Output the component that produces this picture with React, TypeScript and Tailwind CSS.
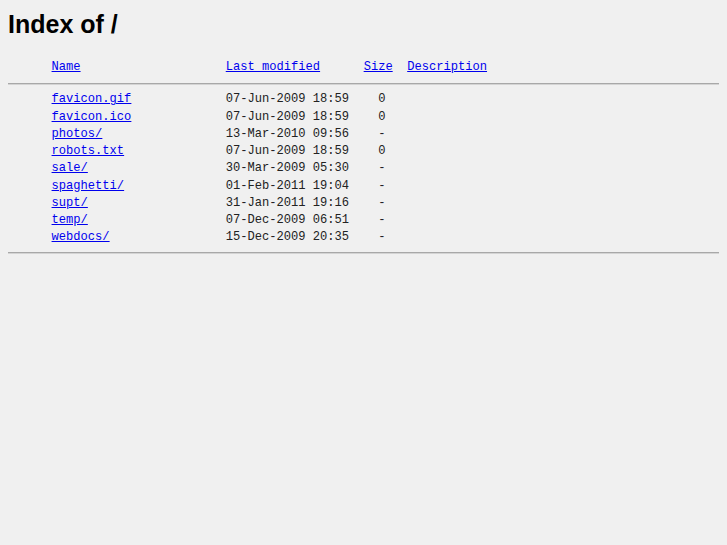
const entries = [
  { name: "favicon.gif", modified: "07-Jun-2009 18:59", size: "0" },
  { name: "favicon.ico", modified: "07-Jun-2009 18:59", size: "0" },
  { name: "photos/", modified: "13-Mar-2010 09:56", size: "-" },
  { name: "robots.txt", modified: "07-Jun-2009 18:59", size: "0" },
  { name: "sale/", modified: "30-Mar-2009 05:30", size: "-" },
  { name: "spaghetti/", modified: "01-Feb-2011 19:04", size: "-" },
  { name: "supt/", modified: "31-Jan-2011 19:16", size: "-" },
  { name: "temp/", modified: "07-Dec-2009 06:51", size: "-" },
  { name: "webdocs/", modified: "15-Dec-2009 20:35", size: "-" },
];

const link = "text-[#0000ee] underline";

export default function App() {
  return (
    <div className="min-h-[545px] bg-[#f0f0f0] px-2 pt-[10px] text-black">
      <h1 className="font-['Liberation_Sans',Arial,sans-serif] text-[25px] leading-[29px] font-bold">
        Index of /
      </h1>
      <div className="mt-[20px] font-['Liberation_Mono','Courier_New',monospace] text-[12.1px] leading-[17.25px] whitespace-pre text-[#222]">
        <div>
          {"      "}
          <a href="?C=N;O=D" className={link}>Name</a>
          {"                    "}
          <a href="?C=M;O=A" className={link}>Last modified</a>
          {"      "}
          <a href="?C=S;O=A" className={link}>Size</a>
          {"  "}
          <a href="?C=D;O=A" className={link}>Description</a>
        </div>
        <hr className="my-[6.5px] border-t border-b border-t-[#a8a8a8] border-b-[#d4d4d4]" />
        {entries.map((e) => (
          <div key={e.name}>
            {"      "}
            <a href={e.name} className={link}>{e.name}</a>
            {" ".repeat(24 - e.name.length)}
            {e.modified}
            {"    "}
            {e.size}
          </div>
        ))}
        <hr className="mt-[5.5px] border-t border-b border-t-[#a8a8a8] border-b-[#d4d4d4]" />
      </div>
    </div>
  );
}
